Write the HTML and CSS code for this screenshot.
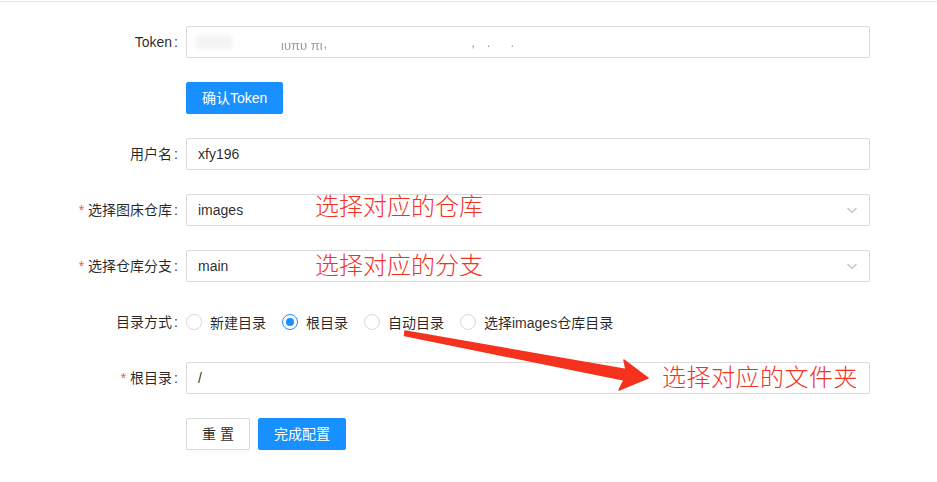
FILE: index.html
```html
<!DOCTYPE html>
<html lang="zh-CN">
<head>
<meta charset="utf-8">
<title>图床配置</title>
<link rel="stylesheet" href="styles.css">
</head>
<body>
<div class="page">
  <div class="topline"></div>
  <form class="form">
    <div class="item">
      <label class="label">Token</label>
      <div class="control">
        <div class="input token">
          <span class="blob"></span>
          <span class="tk t1">ιυπυ πι</span>
          <span class="tk t2">,</span>
          <span class="tk t3">,</span>
          <span class="tk t4">.</span>
          <span class="tk t5">.</span>
        </div>
      </div>
    </div>
    <div class="item">
      <span class="label empty"></span>
      <div class="control">
        <button type="button" class="btn primary">确认Token</button>
      </div>
    </div>
    <div class="item">
      <label class="label">用户名</label>
      <div class="control"><div class="input">xfy196</div></div>
    </div>
    <div class="item">
      <label class="label req">选择图床仓库</label>
      <div class="control">
        <div class="input select">images
          <svg class="chev" viewBox="0 0 12 12" width="12" height="12"><path d="M1.5 4 L6 8.5 L10.5 4" fill="none" stroke="#bfbfbf" stroke-width="1.1"/></svg>
        </div>
      </div>
    </div>
    <div class="item">
      <label class="label req">选择仓库分支</label>
      <div class="control">
        <div class="input select">main
          <svg class="chev" viewBox="0 0 12 12" width="12" height="12"><path d="M1.5 4 L6 8.5 L10.5 4" fill="none" stroke="#bfbfbf" stroke-width="1.1"/></svg>
        </div>
      </div>
    </div>
    <div class="item">
      <label class="label">目录方式</label>
      <div class="control radios">
        <span class="radio"><span class="dot"></span><span class="rtext">新建目录</span></span>
        <span class="radio checked"><span class="dot"></span><span class="rtext">根目录</span></span>
        <span class="radio"><span class="dot"></span><span class="rtext">自动目录</span></span>
        <span class="radio"><span class="dot"></span><span class="rtext">选择images仓库目录</span></span>
      </div>
    </div>
    <div class="item">
      <label class="label req">根目录</label>
      <div class="control"><div class="input">/</div></div>
    </div>
    <div class="item">
      <span class="label empty"></span>
      <div class="control buttons">
        <button type="button" class="btn">重 置</button>
        <button type="button" class="btn primary">完成配置</button>
      </div>
    </div>
  </form>

  <div class="annot a1">选择对应的仓库</div>
  <div class="annot a2">选择对应的分支</div>
  <div class="annot a3">选择对应的文件夹</div>
  <svg class="arrow" viewBox="0 0 937 482" width="937" height="482">
    <polygon points="405,331 626,369.5 624,360 648,378 619,390 624,380 404.5,335.5" fill="#f5321e" stroke="#f5321e" stroke-width="1.5" stroke-linejoin="round"/>
  </svg>
</div>
</body>
</html>
```

FILE: styles.css
```css
* { box-sizing: border-box; }
html, body { margin: 0; padding: 0; background: #fff; }
body {
  font-family: "Liberation Sans", "Noto Sans CJK SC", sans-serif;
  font-size: 14px;
  color: rgba(0, 0, 0, 0.85);
}
.page {
  position: relative;
  width: 937px;
  height: 482px;
  overflow: hidden;
}
.topline {
  margin-top: 1px;
  height: 1px;
  background: #e6e6e6;
  box-shadow: 0 3px 3px rgba(0, 0, 0, 0.02);
}
.form {
  display: flex;
  flex-direction: column;
  gap: 24px;
  padding-top: 24px;
}
.item {
  display: grid;
  grid-template-columns: 186px 684px;
  height: 32px;
}
.label {
  text-align: right;
  line-height: 32px;
  color: rgba(0, 0, 0, 0.85);
  white-space: nowrap;
}
.label::after {
  content: ":";
  margin: 0 8px 0 2px;
}
.label.empty::after { content: none; }
.label.req::before {
  content: "*";
  display: inline-block;
  margin-right: 4px;
  color: #ff4d4f;
  font-size: 14px;
  line-height: 1;
  font-family: "Liberation Sans", sans-serif;
}
.control {
  display: flex;
  align-items: center;
}
.input {
  position: relative;
  width: 100%;
  height: 32px;
  border: 1px solid #d9d9d9;
  border-radius: 2px;
  padding: 4px 11px;
  display: flex;
  align-items: center;
  color: rgba(0, 0, 0, 0.85);
  background: #fff;
}
.chev {
  position: absolute;
  right: 11px;
  top: 9px;
}
.token .blob {
  width: 36px;
  height: 14px;
  margin-left: -2px;
  background: #f3f3f3;
  filter: blur(2px);
}
.tk {
  color: #9a9a9a;
  font-size: 13px;
  filter: blur(0.4px);
  line-height: 1;
}
.t1 { margin-left: 49px; position: relative; top: 3px; }
.t2 { margin-left: 1px; position: relative; top: 1px; }
.t3 { margin-left: 144px; }
.t4 { margin-left: 12px; }
.t5 { margin-left: 20px; }
.btn {
  height: 32px;
  padding: 4px 15px;
  font-family: inherit;
  font-size: 14px;
  border: 1px solid #d9d9d9;
  border-radius: 2px;
  background: #fff;
  color: rgba(0, 0, 0, 0.85);
  box-shadow: 0 2px 0 rgba(0, 0, 0, 0.015);
  cursor: pointer;
  line-height: 1.5715;
}
.btn.primary {
  background: #1890ff;
  border-color: #1890ff;
  color: #fff;
}
.buttons { gap: 8px; }
.radios { gap: 0; }
.radio {
  display: inline-flex;
  align-items: center;
  margin-right: 8px;
  color: rgba(0, 0, 0, 0.85);
}
.dot {
  width: 16px;
  height: 16px;
  border: 1px solid #d9d9d9;
  border-radius: 50%;
  background: #fff;
  display: inline-flex;
  align-items: center;
  justify-content: center;
}
.radio.checked .dot { border-color: #1890ff; }
.radio.checked .dot::after {
  content: "";
  width: 8px;
  height: 8px;
  border-radius: 50%;
  background: #1890ff;
}
.rtext { padding: 0 8px; }
.annot {
  position: absolute;
  font-family: "Noto Sans CJK SC", sans-serif;
  font-size: 24px;
  line-height: 24px;
  color: #f2311f;
  font-weight: 300;
  white-space: nowrap;
}
.a1 { left: 315px; top: 193px; }
.a2 { left: 315px; top: 252px; }
.a3 { left: 662px; top: 364px; letter-spacing: 0.5px; }
.arrow {
  position: absolute;
  left: 0;
  top: 0;
  pointer-events: none;
}
```
